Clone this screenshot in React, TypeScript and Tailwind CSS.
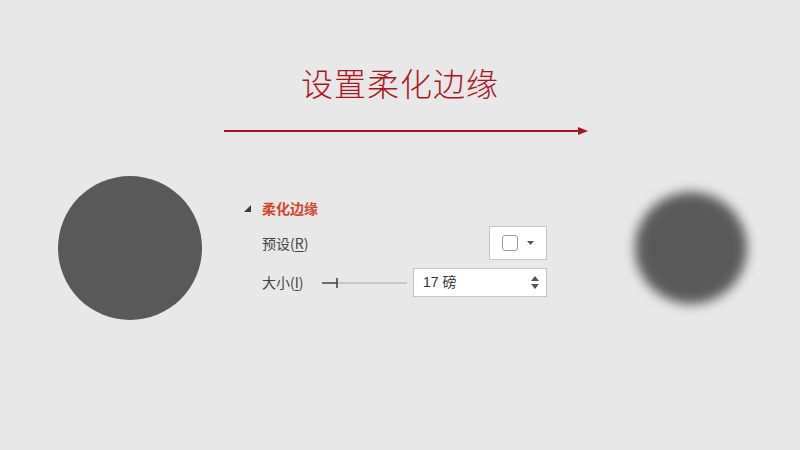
import React from 'react';

const cjk = { fontFamily: '"Microsoft YaHei", "Noto Sans CJK SC", "Noto Sans", sans-serif' };

const Arrow = () => (
  <svg width="366" height="10" viewBox="0 0 366 10" className="block">
    <line x1="0" y1="5" x2="356" y2="5" stroke="#a8121c" strokeWidth="2.2" />
    <polygon points="354,1 364,5 354,9" fill="#a8121c" />
  </svg>
);

const Panel = () => (
  <div className="mt-[22px] w-[304px] text-[14px] text-[#444]" style={cjk}>
    <div className="flex h-5 items-center">
      <svg width="7" height="7" viewBox="0 0 7 7" className="ml-[1px] mr-[11px]">
        <polygon points="7,0 7,7 0,7" fill="#3a3a3a" />
      </svg>
      <span className="font-bold text-[#d8432a]">柔化边缘</span>
    </div>
    <div className="mt-2 flex h-[34px] items-center justify-between pl-[19px]">
      <span>
        预设(<span className="underline underline-offset-2">R</span>)
      </span>
      <div className="flex h-[34px] w-[58px] items-center justify-center gap-[9px] border border-[#c4c4c4] bg-white">
        <div className="h-4 w-4 rounded-[3px] border-[1.5px] border-[#9a9a9a]" />
        <svg width="7" height="4" viewBox="0 0 7 4">
          <polygon points="0,0 7,0 3.5,4" fill="#555" />
        </svg>
      </div>
    </div>
    <div className="mt-2 flex h-[29px] items-center pl-[19px]">
      <span className="w-[60px]">
        大小(<span className="underline underline-offset-2">I</span>)
      </span>
      <svg width="85" height="12" viewBox="0 0 85 12" className="mr-[6px]">
        <line x1="0" y1="6" x2="85" y2="6" stroke="#a8a8a8" strokeWidth="1" />
        <line x1="0" y1="6" x2="15" y2="6" stroke="#555" strokeWidth="1.6" />
        <line x1="15" y1="1" x2="15" y2="11" stroke="#444" strokeWidth="1.6" />
      </svg>
      <div className="ml-auto flex h-[29px] w-[134px] items-center justify-between border border-[#c4c4c4] bg-white pl-[9px] pr-[7px]">
        <span className="text-[#333]" style={{ fontFamily: '"Liberation Sans", "Noto Sans CJK SC", sans-serif' }}>
          17 磅
        </span>
        <svg width="8" height="13" viewBox="0 0 8 13">
          <polygon points="0,5 8,5 4,0" fill="#555" />
          <polygon points="0,8 8,8 4,13" fill="#555" />
        </svg>
      </div>
    </div>
  </div>
);

export default function App() {
  return (
    <div className="flex h-[450px] w-[800px] flex-col overflow-hidden bg-[#e8e8e8]">
      <h1 className="pt-[62px] text-center text-[32px] font-light leading-[40px] tracking-[1px] text-[#b0151d]" style={cjk}>
        设置柔化边缘
      </h1>
      <div className="mt-[24px] pl-[224px]">
        <Arrow />
      </div>
      <div className="mt-[40px] flex items-start pl-[58px]">
        <div className="h-[144px] w-[144px] shrink-0 rounded-full bg-[#595959]" />
        <div className="ml-[41px]">
          <Panel />
        </div>
        <div className="ml-[88px] mt-[16px] h-[112px] w-[112px] shrink-0 rounded-full bg-[#595959] blur-[6px]" />
      </div>
    </div>
  );
}
